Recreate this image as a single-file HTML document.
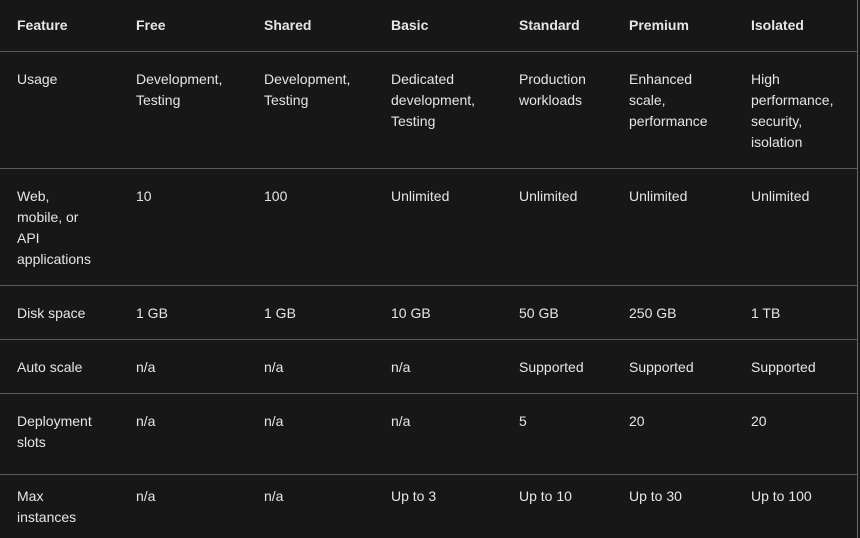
<!DOCTYPE html>
<html><head><style>
html,body{margin:0;padding:0;background:#171717;width:860px;height:538px;overflow:hidden;position:relative}
body{font-family:"Liberation Sans",sans-serif;font-size:14px;color:#e6e6e6}
.t{position:absolute;line-height:21px;white-space:nowrap}
.b{font-weight:bold}
.h{position:absolute;left:0;width:857px;height:1px;background:#5a5a5a}
.vl{position:absolute;left:857px;top:0;width:1px;height:538px;background:#6a6a6a}
</style></head><body>
<div class="h" style="top:51px"></div>
<div class="h" style="top:168px"></div>
<div class="h" style="top:285px"></div>
<div class="h" style="top:339px"></div>
<div class="h" style="top:393px"></div>
<div class="h" style="top:474px"></div>
<div class="vl"></div>

<div class="t b" style="top:15px;left:17px">Feature</div>
<div class="t b" style="top:15px;left:136px">Free</div>
<div class="t b" style="top:15px;left:264px">Shared</div>
<div class="t b" style="top:15px;left:391px">Basic</div>
<div class="t b" style="top:15px;left:519px">Standard</div>
<div class="t b" style="top:15px;left:629px">Premium</div>
<div class="t b" style="top:15px;left:751px">Isolated</div>

<div class="t" style="top:69px;left:17px">Usage</div>
<div class="t" style="top:69px;left:136px">Development,<br>Testing</div>
<div class="t" style="top:69px;left:264px">Development,<br>Testing</div>
<div class="t" style="top:69px;left:391px">Dedicated<br>development,<br>Testing</div>
<div class="t" style="top:69px;left:519px">Production<br>workloads</div>
<div class="t" style="top:69px;left:629px">Enhanced<br>scale,<br>performance</div>
<div class="t" style="top:69px;left:751px">High<br>performance,<br>security,<br>isolation</div>

<div class="t" style="top:186px;left:17px">Web,<br>mobile, or<br>API<br>applications</div>
<div class="t" style="top:186px;left:136px">10</div>
<div class="t" style="top:186px;left:264px">100</div>
<div class="t" style="top:186px;left:391px">Unlimited</div>
<div class="t" style="top:186px;left:519px">Unlimited</div>
<div class="t" style="top:186px;left:629px">Unlimited</div>
<div class="t" style="top:186px;left:751px">Unlimited</div>

<div class="t" style="top:303px;left:17px">Disk space</div>
<div class="t" style="top:303px;left:136px">1 GB</div>
<div class="t" style="top:303px;left:264px">1 GB</div>
<div class="t" style="top:303px;left:391px">10 GB</div>
<div class="t" style="top:303px;left:519px">50 GB</div>
<div class="t" style="top:303px;left:629px">250 GB</div>
<div class="t" style="top:303px;left:751px">1 TB</div>

<div class="t" style="top:357px;left:17px">Auto scale</div>
<div class="t" style="top:357px;left:136px">n/a</div>
<div class="t" style="top:357px;left:264px">n/a</div>
<div class="t" style="top:357px;left:391px">n/a</div>
<div class="t" style="top:357px;left:519px">Supported</div>
<div class="t" style="top:357px;left:629px">Supported</div>
<div class="t" style="top:357px;left:751px">Supported</div>

<div class="t" style="top:411px;left:17px">Deployment<br>slots</div>
<div class="t" style="top:411px;left:136px">n/a</div>
<div class="t" style="top:411px;left:264px">n/a</div>
<div class="t" style="top:411px;left:391px">n/a</div>
<div class="t" style="top:411px;left:519px">5</div>
<div class="t" style="top:411px;left:629px">20</div>
<div class="t" style="top:411px;left:751px">20</div>

<div class="t" style="top:486px;left:17px">Max<br>instances</div>
<div class="t" style="top:486px;left:136px">n/a</div>
<div class="t" style="top:486px;left:264px">n/a</div>
<div class="t" style="top:486px;left:391px">Up to 3</div>
<div class="t" style="top:486px;left:519px">Up to 10</div>
<div class="t" style="top:486px;left:629px">Up to 30</div>
<div class="t" style="top:486px;left:751px">Up to 100</div>
</body></html>
